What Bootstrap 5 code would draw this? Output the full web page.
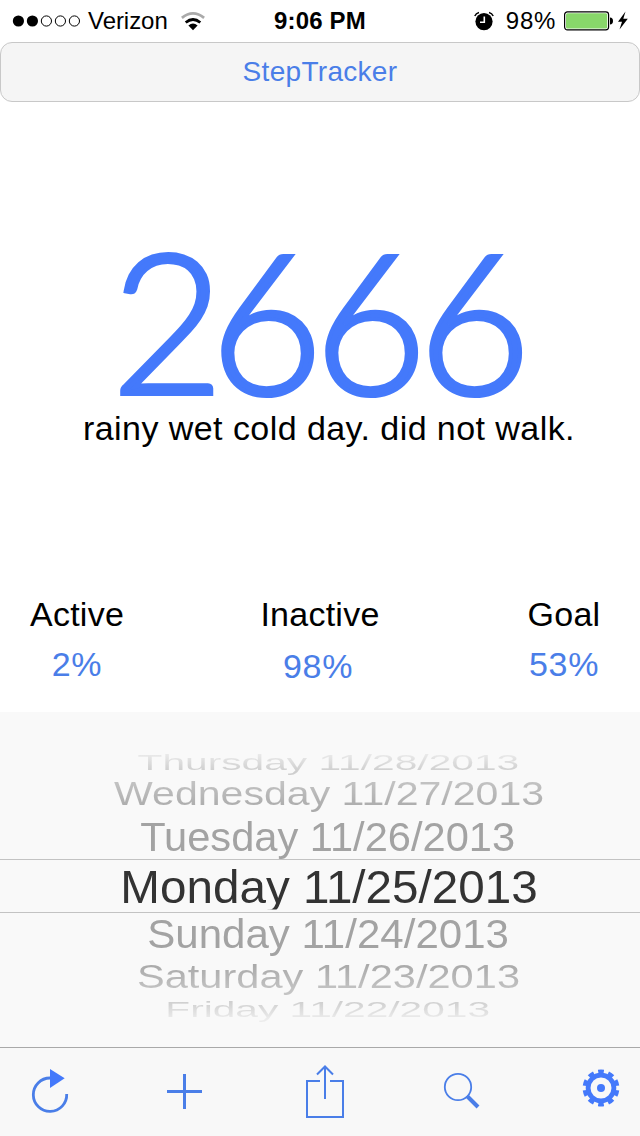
<!DOCTYPE html>
<html lang="en">
<head>
<meta charset="utf-8">
<meta name="viewport" content="width=device-width, initial-scale=1">
<title>StepTracker</title>
<link href="https://cdn.jsdelivr.net/npm/bootstrap@5.3.0/dist/css/bootstrap.min.css" rel="stylesheet">
<style>
:root { --accent: #4479fb; }
body { font-family: "Liberation Sans", Arial, sans-serif; color: #000; line-height: 1; }
.screen { width: 640px; height: 1136px; background: #fff; }
svg { display: block; flex: none; overflow: visible; }
.accent { color: #4a7ee8; }
.status { height: 42px; font-size: 24px; line-height: 42px; }
.status > div { flex: 0 0 273px; }
.carrier { margin-left: 8px; letter-spacing: -.05px; }
.clock { flex: 0 0 94px; text-align: center; letter-spacing: .15px; white-space: nowrap; }
.title-btn { height: 60px; font-size: 28px; border: 1px solid #c8c8c8; border-radius: 12px; background: #f5f5f5; letter-spacing: .3px; }
.count-area { height: 304px; padding-top: 130px; }
.count { font-family: Lato, sans-serif; font-weight: 300; font-size: 195px; line-height: 174px; height: 174px; letter-spacing: -9.1px; padding-right: 7px; color: var(--accent); white-space: nowrap; -webkit-text-stroke: 4px var(--accent); }
.count::first-letter { letter-spacing: -14px; }
.note-area { height: 194px; font-size: 34px; line-height: 44px; letter-spacing: .44px; padding-left: 18px; white-space: nowrap; }
.stats { height: 112px; font-size: 34px; }
.stats .name { line-height: 28px; height: 50px; letter-spacing: .25px; }
.stats .val { line-height: 28px; letter-spacing: .7px; }
.stats .val-low { line-height: 32px; }
.picker { height: 335px; padding-top: 34px; background: #f9f9f9; }
.rowline { display: flex; align-items: center; justify-content: center; padding-left: 16px; }
.rowline span { font-size: 47px; line-height: 56px; white-space: nowrap; flex: none; color: #a3a3a3; }
.thu { height: 31px; } .wed { height: 33px; padding-left: 18px; padding-top: 1px; } .tue { height: 49px; padding-top: 5px; }
.mon { height: 54px; border: solid #c3c3c3; border-width: 1px 0; overflow: hidden; padding-left: 18px; }
.mon span { color: #333; clip-path: inset(0 0 5px 0); padding-top: 1px; transform: scaleX(1.013); }
.sun { height: 42px; } .sat { height: 43px; padding-top: 1px; } .fri { height: 23px; }
.thu span { transform: scale(.866,.47); }
.wed span { transform: scale(.874,.695); }
.tue span { transform: scale(.886,.86); }
.sun span { transform: scale(.895,.86); }
.sat span { transform: scale(.885,.69); }
.fri span { transform: scale(.865,.46); }
.rowline.fade-tone span { color: transparent; background-clip: text; -webkit-background-clip: text; }
.thu.fade-tone span { background-image: linear-gradient(#ececec 15%, #cecece 85%); }
.wed.fade-tone span { background-image: linear-gradient(#c4c4c4 15%, #acacac 85%); }
.sat.fade-tone span { background-image: linear-gradient(#a8a8a8 15%, #c4c4c4 85%); }
.fri.fade-tone span { background-image: linear-gradient(#cecece 15%, #ececec 85%); }
.tools { height: 89px; background: #f8f8f8; border-top: 1px solid #a9a9a9; padding-left: 32px; }
.tools button { background: none; border: 0; padding: 0; }
.gap-add, .gap-search { margin-left: 99px; }
.gap-share { margin-left: 102px; }
.gap-settings { margin-left: 103px; }
</style>
</head>
<body>
<main class="screen d-flex flex-column overflow-hidden">
  <header class="status d-flex align-items-center">
    <div class="d-flex align-items-center ps-2">
      <svg width="72" height="14"><g transform="translate(5 6)"><circle cx="5.4" cy="1" r="5.6"/><circle cx="19.4" cy="1" r="5.6"/><g fill="none" stroke="#000"><circle cx="33.4" cy="1" r="5.1"/><circle cx="47.4" cy="1" r="5.1"/><circle cx="61.4" cy="1" r="5.1"/></g></g></svg>
      <span class="carrier">Verizon</span>
      <svg width="24" height="18" viewBox="0 0 24 18" style="margin-left:13px"><g fill="none" stroke-width="2.8"><path d="M.9 5.8Q12 -3 23.1 5.8" stroke="#aaa"/><path d="M4.7 10.5Q12 4.6 19.3 10.5" stroke="#000"/></g><path d="M7.4 13.6Q12 9.4 16.6 13.6L12 18.2Z"/></svg>
    </div>
    <strong class="clock">9:06 PM</strong>
    <div class="d-flex align-items-center justify-content-end">
      <svg width="20" height="19" viewBox="0 0 20 19" style="margin-right:12px"><circle cx="10" cy="9.6" r="8.6"/><path d="M10.3 4.6V10.2H6" stroke="#fff" stroke-width="1.6" fill="none"/><path d="M.8 4Q2 1.2 5 .5M19.2 4Q18 1.2 15 .5" stroke="#000" stroke-width="1.5" fill="none"/></svg>
      <span style="letter-spacing:.7px">98%</span>
      <svg width="65" height="20" viewBox="0 0 65 20" style="margin:0 11px 0 8px"><rect x=".6" y=".9" width="44" height="18" rx="2.8" fill="#fff" stroke="#000" stroke-width="1.2"/><rect x="2" y="2.3" width="41.2" height="15.2" rx="1.5" fill="#88d76a"/><path d="M46 6.6Q49 6.8 49 10Q49 13.3 46 13.5Z"/><path d="M61.5 .4L54 10.8H58L55.5 18.6L63.8 7.8H59.3Z"/></svg>
    </div>
  </header>
  <button class="title-btn accent w-100 p-0 flex-shrink-0">StepTracker</button>
  <section class="count-area text-center flex-shrink-0"><div class="count">2666</div></section>
  <p class="note-area text-center mb-0 flex-shrink-0">rainy wet cold day. did not walk.</p>
  <section class="stats d-flex justify-content-between text-center flex-shrink-0">
    <div style="width:154px"><div class="name">Active</div><div class="val accent">2%</div></div>
    <div style="width:200px"><div class="name ps-1">Inactive</div><div class="val val-low accent">98%</div></div>
    <div style="width:158px;padding-left:6px"><div class="name">Goal</div><div class="val accent">53%</div></div>
  </section>
  <section class="picker flex-shrink-0">
    <div class="rowline thu fade-tone"><span>Thursday 11/28/2013</span></div>
    <div class="rowline wed fade-tone"><span>Wednesday 11/27/2013</span></div>
    <div class="rowline tue"><span>Tuesday 11/26/2013</span></div>
    <div class="rowline mon"><span>Monday 11/25/2013</span></div>
    <div class="rowline sun"><span>Sunday 11/24/2013</span></div>
    <div class="rowline sat fade-tone"><span>Saturday 11/23/2013</span></div>
    <div class="rowline fri fade-tone"><span>Friday 11/22/2013</span></div>
  </section>
  <nav class="tools d-flex align-items-center flex-shrink-0" aria-label="Actions">
    <button aria-label="Refresh"><svg width="36" height="72" viewBox="32 1056 36 72"><path d="M50 1078A16.7 16.7 0 1 0 66.7 1094" fill="none" stroke="#4a7ee8" stroke-width="2.8"/><path d="M50 1069L64.7 1078.3L50 1088Z" fill="#4479fb"/></svg></button>
    <button class="gap-add" aria-label="Add"><svg width="36" height="72" viewBox="167 1056 36 72"><path d="M184.5 1074V1109M167 1091.5H202" stroke="#4a7ee8" stroke-width="3"/></svg></button>
    <button class="gap-share" aria-label="Share"><svg width="40" height="72" viewBox="305 1056 40 72"><path d="M320 1081H307V1117H343V1081H330M325 1099V1067M317 1074.5L325 1066.5L333 1074.5" fill="none" stroke="#4a7ee8" stroke-width="2"/></svg></button>
    <button class="gap-search" aria-label="Search"><svg width="36" height="72" viewBox="444 1056 36 72"><circle cx="458" cy="1087" r="13.2" fill="none" stroke="#4a7ee8" stroke-width="1.8"/><path d="M467 1096L478 1107" stroke="#4a7ee8" stroke-width="4"/></svg></button>
    <button class="gap-settings" aria-label="Settings"><svg width="36" height="72" viewBox="583.5 1056 36 72"><g fill="none" stroke="#4479fb"><circle cx="601.5" cy="1088" r="12.9" stroke-width="4.8"/><circle cx="601.5" cy="1088" r="16.4" stroke-width="4" pathLength="100" stroke-dasharray="5.6 4.4" stroke-dashoffset="-2.2"/></g><circle cx="601.5" cy="1088" r="4" fill="#4479fb"/></svg></button>
  </nav>
</main>
<script src="https://cdn.jsdelivr.net/npm/bootstrap@5.3.0/dist/js/bootstrap.bundle.min.js"></script>
</body>
</html>
